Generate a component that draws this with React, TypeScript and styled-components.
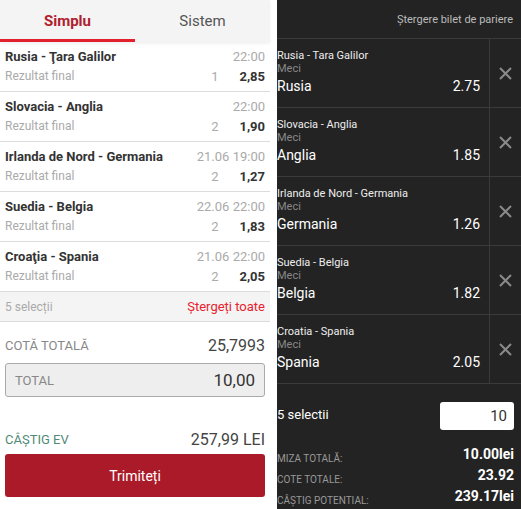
import React from "react";
import styled, { createGlobalStyle } from "styled-components";

const Global = createGlobalStyle`
  html, body { margin: 0; padding: 0; background: #fff; }
  body { font-family: Roboto, "Liberation Sans", Arial, sans-serif; }
  * { box-sizing: border-box; }
`;

const Page = styled.div`
  display: flex;
  width: 521px;
  height: 509px;
  background: #fff;
  overflow: hidden;
`;

const Left = styled.div`
  width: 270px;
  display: flex;
  flex-direction: column;
  background: #fff;
`;

const Tabs = styled.div`
  display: flex;
  height: 42px;
  background: #f4f4f4;
  box-shadow: 0 2px 3px rgba(0, 0, 0, 0.06);
  position: relative;
  z-index: 1;
`;

const Tab = styled.div<{ $active?: boolean }>`
  flex: 1;
  display: flex;
  align-items: center;
  justify-content: center;
  font-size: 15px;
  font-weight: ${(p) => (p.$active ? 700 : 400)};
  color: ${(p) => (p.$active ? "#b0202e" : "#555")};
  border-bottom: 3px solid ${(p) => (p.$active ? "#e3202e" : "transparent")};
  padding-top: 3px;
`;

const Row = styled.div`
  padding: 4px 5px 5px;
  border-bottom: 1px solid #dcdcdc;
  display: flex;
  flex-direction: column;
`;

const Line = styled.div`
  display: flex;
  align-items: center;
  height: 20px;
`;

const Match = styled.div`
  flex: 1;
  font-size: 13px;
  font-weight: 700;
  color: #333;
`;

const Time = styled.div`
  font-size: 13px;
  color: #aaa;
`;

const Market = styled.div`
  flex: 1;
  font-size: 12px;
  color: #aaa;
`;

const Pick = styled.div`
  font-size: 13px;
  color: #aaa;
  width: 20px;
  text-align: center;
`;

const Odd = styled.div`
  width: 40px;
  text-align: right;
  font-size: 13px;
  font-weight: 700;
  color: #333;
`;

const SummaryBar = styled.div`
  height: 30px;
  display: flex;
  align-items: center;
  justify-content: space-between;
  padding: 0 5px;
  background: #f4f4f4;
  border-bottom: 1px solid #dcdcdc;
  font-size: 12px;
`;

const Muted = styled.span`
  color: #aaa;
`;

const Danger = styled.span`
  color: #e8212e;
  font-size: 13px;
`;

const Totals = styled.div`
  padding: 12px 5px 0;
  display: flex;
  flex-direction: column;
`;

const TotalLine = styled.div`
  display: flex;
  align-items: center;
  justify-content: space-between;
  height: 22px;
`;

const Label = styled.span<{ $color?: string }>`
  font-size: 13px;
  color: ${(p) => p.$color || "#888"};
`;

const BigValue = styled.span`
  font-size: 16px;
  color: #444;
`;

const StakeBox = styled.div`
  margin-top: 7px;
  height: 34px;
  border: 1px solid #aaa;
  border-radius: 3px;
  background: #eeeeee;
  display: flex;
  align-items: center;
  justify-content: space-between;
  padding: 0 9px 0 9px;
`;

const StakeValue = styled.span`
  font-size: 17px;
  color: #333;
`;

const Spacer = styled.div`
  height: 31px;
`;

const SubmitButton = styled.button`
  margin-top: 4px;
  height: 43px;
  width: 100%;
  border: none;
  border-radius: 3px;
  background: #ab1a28;
  color: #fff;
  font-family: inherit;
  font-size: 14px;
`;

const Gap = styled.div`
  width: 7px;
  background: #fff;
`;

const Right = styled.div`
  flex: 1;
  background: #232323;
  display: flex;
  flex-direction: column;
  color: #fff;
`;

const RightHeader = styled.div`
  height: 39px;
  display: flex;
  align-items: center;
  justify-content: flex-end;
  padding-right: 8px;
  border-bottom: 1px solid #3a3a3a;
  font-size: 11px;
  color: #bbb;
`;

const Slip = styled.div`
  display: flex;
  height: 69px;
  border-bottom: 1px solid #3a3a3a;
`;

const SlipBody = styled.div`
  flex: 1;
  padding: 10px 9px 0 0;
  display: flex;
  flex-direction: column;
`;

const SlipTitle = styled.div`
  font-size: 11px;
  line-height: 14px;
  color: #eee;
`;

const SlipMarket = styled.div`
  font-size: 11px;
  line-height: 12px;
  color: #888;
`;

const SlipPick = styled.div`
  display: flex;
  justify-content: space-between;
  align-items: center;
  height: 22px;
  font-size: 14px;
  color: #fff;
`;

const CloseCell = styled.div`
  width: 32px;
  border-left: 1px solid #3a3a3a;
  display: flex;
  align-items: center;
  justify-content: center;
`;

const Footer = styled.div`
  padding: 17px 7px 0 0;
  display: flex;
  flex-direction: column;
`;

const FooterTop = styled.div`
  display: flex;
  align-items: center;
  justify-content: space-between;
  height: 30px;
  margin-bottom: 12px;
`;

const FooterLabel = styled.span`
  font-size: 13px;
  color: #fff;
  margin-bottom: 3px;
`;

const StakeInput = styled.div`
  width: 74px;
  height: 28px;
  background: #fff;
  border-radius: 3px;
  color: #333;
  font-size: 15px;
  display: flex;
  align-items: center;
  justify-content: flex-end;
  padding-right: 7px;
`;

const SumLine = styled.div`
  display: flex;
  align-items: flex-end;
  justify-content: space-between;
  height: 21px;
`;

const SumLabel = styled.span`
  font-size: 10px;
  color: #999;
  text-transform: uppercase;
`;

const SumValue = styled.span`
  font-size: 14px;
  font-weight: 700;
  color: #fff;
  margin-bottom: 2px;
`;

const CloseIcon = () => (
  <svg width="13" height="13" viewBox="0 0 13 13">
    <path d="M1 1 L12 12 M12 1 L1 12" stroke="#8a8a8a" strokeWidth="2" />
  </svg>
);

const leftRows = [
  { m: "Rusia - Ţara Galilor", t: "22:00", p: "1", o: "2,85" },
  { m: "Slovacia - Anglia", t: "22:00", p: "2", o: "1,90" },
  { m: "Irlanda de Nord - Germania", t: "21.06 19:00", p: "2", o: "1,27" },
  { m: "Suedia - Belgia", t: "22.06 22:00", p: "2", o: "1,83" },
  { m: "Croaţia - Spania", t: "21.06 22:00", p: "2", o: "2,05" },
];

const rightRows = [
  { m: "Rusia - Tara Galilor", s: "Rusia", o: "2.75" },
  { m: "Slovacia - Anglia", s: "Anglia", o: "1.85" },
  { m: "Irlanda de Nord - Germania", s: "Germania", o: "1.26" },
  { m: "Suedia - Belgia", s: "Belgia", o: "1.82" },
  { m: "Croatia - Spania", s: "Spania", o: "2.05" },
];

export default function App() {
  return (
    <Page>
      <Global />
      <Left>
        <Tabs>
          <Tab $active>Simplu</Tab>
          <Tab>Sistem</Tab>
        </Tabs>
        {leftRows.map((r) => (
          <Row key={r.m}>
            <Line>
              <Match>{r.m}</Match>
              <Time>{r.t}</Time>
            </Line>
            <Line>
              <Market>Rezultat final</Market>
              <Pick>{r.p}</Pick>
              <Odd>{r.o}</Odd>
            </Line>
          </Row>
        ))}
        <SummaryBar>
          <Muted>5 selecții</Muted>
          <Danger>Ștergeți toate</Danger>
        </SummaryBar>
        <Totals>
          <TotalLine>
            <Label>COTĂ TOTALĂ</Label>
            <BigValue>25,7993</BigValue>
          </TotalLine>
          <StakeBox>
            <Label>TOTAL</Label>
            <StakeValue>10,00</StakeValue>
          </StakeBox>
          <Spacer />
          <TotalLine>
            <Label $color="#4f8a78">CÂȘTIG EV</Label>
            <BigValue>257,99 LEI</BigValue>
          </TotalLine>
          <SubmitButton>Trimiteți</SubmitButton>
        </Totals>
      </Left>
      <Gap />
      <Right>
        <RightHeader>Ștergere bilet de pariere</RightHeader>
        {rightRows.map((r) => (
          <Slip key={r.m}>
            <SlipBody>
              <SlipTitle>{r.m}</SlipTitle>
              <SlipMarket>Meci</SlipMarket>
              <SlipPick>
                <span>{r.s}</span>
                <span>{r.o}</span>
              </SlipPick>
            </SlipBody>
            <CloseCell>
              <CloseIcon />
            </CloseCell>
          </Slip>
        ))}
        <Footer>
          <FooterTop>
            <FooterLabel>5 selectii</FooterLabel>
            <StakeInput>10</StakeInput>
          </FooterTop>
          <SumLine>
            <SumLabel>Miza totală:</SumLabel>
            <SumValue>10.00lei</SumValue>
          </SumLine>
          <SumLine>
            <SumLabel>Cote totale:</SumLabel>
            <SumValue>23.92</SumValue>
          </SumLine>
          <SumLine>
            <SumLabel>Câștig potential:</SumLabel>
            <SumValue>239.17lei</SumValue>
          </SumLine>
        </Footer>
      </Right>
    </Page>
  );
}
